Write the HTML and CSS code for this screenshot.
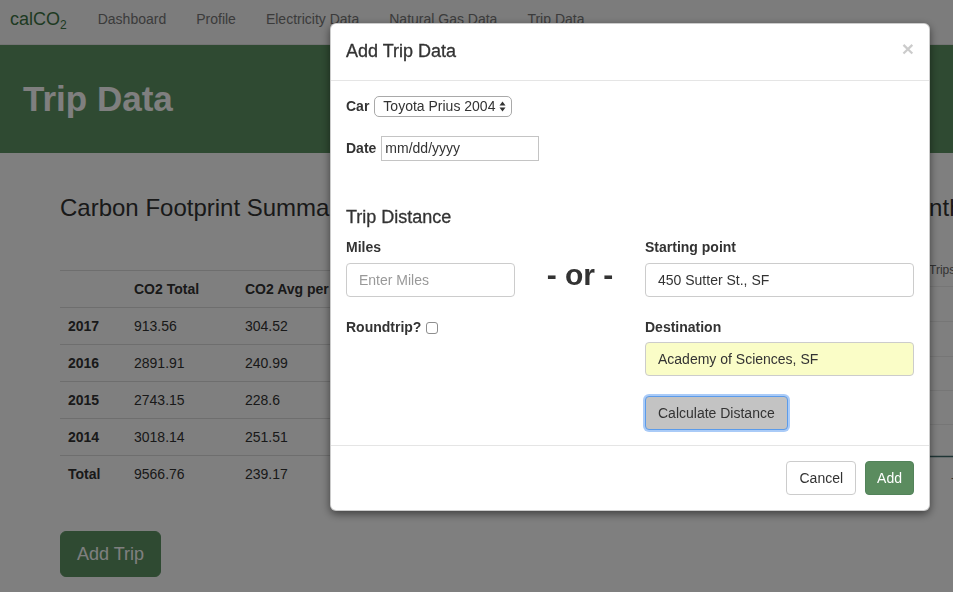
FILE: index.html
```html
<!DOCTYPE html>
<html lang="en">
<head>
<meta charset="utf-8">
<title>calCO2 - Trip Data</title>
<link rel="stylesheet" href="styles.css">
</head>
<body>
<div class="page">
  <nav class="navbar">
    <a class="brand">calCO<sub>2</sub></a>
    <a class="nav-link">Dashboard</a>
    <a class="nav-link">Profile</a>
    <a class="nav-link">Electricity Data</a>
    <a class="nav-link">Natural Gas Data</a>
    <a class="nav-link">Trip Data</a>
  </nav>
  <header class="banner">
    <h1>Trip Data</h1>
  </header>
  <main class="container">
    <section class="summary">
      <h3>Carbon Footprint Summary</h3>
      <table class="table">
        <thead>
          <tr><th class="c1"></th><th class="c2">CO2 Total</th><th>CO2 Avg per Month</th></tr>
        </thead>
        <tbody>
          <tr><th>2017</th><td>913.56</td><td>304.52</td></tr>
          <tr><th>2016</th><td>2891.91</td><td>240.99</td></tr>
          <tr><th>2015</th><td>2743.15</td><td>228.6</td></tr>
          <tr><th>2014</th><td>3018.14</td><td>251.51</td></tr>
          <tr><th>Total</th><td>9566.76</td><td>239.17</td></tr>
        </tbody>
      </table>
      <button class="btn-lg">Add Trip</button>
    </section>
    <section class="monthly">
      <h3>Carbon Footprint by Month</h3>
      <svg class="chart" width="523" height="240" viewBox="0 0 523 240">
        <text x="252" y="25" class="legend">Trips</text>
        <line x1="252" y1="37.5" x2="523" y2="37.5" class="grid"/>
        <line x1="252" y1="72.5" x2="523" y2="72.5" class="grid"/>
        <line x1="252" y1="107.5" x2="523" y2="107.5" class="grid"/>
        <line x1="252" y1="141.5" x2="523" y2="141.5" class="grid"/>
        <line x1="252" y1="175.5" x2="523" y2="175.5" class="grid"/>
        <line x1="252" y1="207.5" x2="523" y2="207.5" class="axis"/>
        <text x="274" y="233" class="tick">-</text>
      </svg>
    </section>
  </main>
</div>

<div class="backdrop"></div>

<div class="modal-wrap">
  <div class="modal">
    <div class="modal-header">
      <span class="close">&times;</span>
      <h4 class="modal-title">Add Trip Data</h4>
    </div>
    <div class="modal-body">
      <div class="inline-row">
        <label class="lbl">Car</label>
        <span class="select">Toyota Prius 2004
          <svg width="7" height="11" viewBox="0 0 7 11"><path d="M3.5 0.5 L6.5 4.5 H0.5 Z M3.5 10.5 L6.5 6.5 H0.5 Z" fill="#333"/></svg>
        </span>
      </div>
      <div class="inline-row">
        <label class="lbl">Date</label>
        <input class="date" type="text" value="mm/dd/yyyy">
      </div>
      <h4 class="section-title">Trip Distance</h4>
      <div class="distance">
        <div class="col">
          <div class="group">
            <label class="lbl block">Miles</label>
            <input class="form-control" type="text" placeholder="Enter Miles">
          </div>
          <div class="group">
            <label class="lbl block">Roundtrip? <input class="check" type="checkbox"></label>
          </div>
        </div>
        <div class="or">- or -</div>
        <div class="col">
          <div class="group">
            <label class="lbl block">Starting point</label>
            <input class="form-control" type="text" value="450 Sutter St., SF">
          </div>
          <div class="group">
            <label class="lbl block">Destination</label>
            <input class="form-control filled" type="text" value="Academy of Sciences, SF">
          </div>
          <button class="btn btn-calc">Calculate Distance</button>
        </div>
      </div>
    </div>
    <div class="modal-footer">
      <button class="btn btn-default">Cancel</button>
      <button class="btn btn-success">Add</button>
    </div>
  </div>
</div>
</body>
</html>
```

FILE: styles.css
```css
html, body {
  margin: 0;
  padding: 0;
  overflow: hidden;
}
body {
  font-family: "Liberation Sans", Arial, Helvetica, sans-serif;
  font-size: 14px;
  line-height: 1.42857;
  color: #333;
  background: #fff;
}
.page {
  width: 1260px;
}

/* navbar */
.navbar {
  display: flex;
  align-items: flex-start;
  height: 44px;
  background: #f8f8f8;
  border-bottom: 1px solid #e7e7e7;
}
.brand {
  font-size: 18px;
  color: #3c7444;
  padding: 0 16px 0 10px;
  line-height: 38px;
}
.brand sub {
  font-size: 12px;
  line-height: 0;
  vertical-align: -4px;
}
.nav-link {
  color: #777;
  padding: 0 15px;
  line-height: 39px;
}

/* banner */
.banner {
  height: 108px;
  background: #5e9464;
  display: flex;
  align-items: center;
  padding-left: 23px;
}
.banner h1 {
  margin: 0;
  font-size: 35px;
  font-weight: bold;
  color: #fff;
  line-height: 1.1;
}

/* content */
.container {
  width: 1140px;
  margin: 0 auto;
  display: grid;
  grid-template-columns: 1fr 1fr;
  column-gap: 94px;
}
h3 {
  font-size: 24px;
  font-weight: normal;
  line-height: 1.1;
  margin: 42px 0 28px;
  white-space: nowrap;
}
.table {
  width: 100%;
  border-collapse: collapse;
  margin-top: 48.6px;
}
.table th, .table td {
  text-align: left;
  padding: 8px;
  line-height: 20px;
  border-top: 1px solid #ddd;
  white-space: nowrap;
}
.table th { font-weight: bold; }
.table .c1 { width: 50px; }
.table .c2 { width: 95px; }
.btn-lg {
  margin-top: 39px;
  font-family: inherit;
  font-size: 18px;
  line-height: 24px;
  padding: 10px 16px;
  color: #fff;
  background: #5e9464;
  border: 1px solid #5e9464;
  border-radius: 6px;
}
.chart {
  display: block;
  overflow: visible;
}
.chart .legend {
  font-size: 12px;
  fill: #666;
  font-family: "Liberation Sans", Arial, sans-serif;
}
.chart .grid {
  stroke: #ececec;
  stroke-width: 1;
}
.chart .axis {
  stroke: #3f6b6b;
  stroke-width: 1.5;
}
.chart .tick {
  font-size: 12px;
  fill: #666;
  font-family: "Liberation Sans", Arial, sans-serif;
}

/* overlay + modal */
.backdrop {
  position: fixed;
  top: 0;
  left: 0;
  right: 0;
  bottom: 0;
  background: rgba(0, 0, 0, 0.5);
}
.modal-wrap {
  position: fixed;
  top: 0;
  left: 0;
  width: 1260px;
  display: flex;
  justify-content: center;
  padding-top: 23px;
}
.modal {
  width: 600px;
  box-sizing: border-box;
  background: #fff;
  border: 1px solid rgba(0, 0, 0, 0.2);
  border-radius: 6px;
  box-shadow: 0 3px 9px rgba(0, 0, 0, 0.5);
}
.modal-header {
  padding: 15px;
  border-bottom: 1px solid #e5e5e5;
}
.modal-title {
  margin: 0;
  font-size: 18px;
  font-weight: normal;
  line-height: 1.42857;
  -webkit-text-stroke: 0.3px #333;
}
.close {
  float: right;
  font-size: 21px;
  font-weight: bold;
  line-height: 1;
  color: #000;
  opacity: 0.2;
  margin-top: -1px;
}
.modal-body {
  padding: 15px;
}
.inline-row {
  display: flex;
  align-items: center;
  gap: 5px;
  margin-bottom: 19px;
}
.lbl {
  font-weight: bold;
  line-height: 20px;
}
.lbl.block {
  display: block;
  margin-bottom: 5.5px;
}
.select {
  display: inline-flex;
  align-items: center;
  gap: 4px;
  height: 19px;
  padding: 0 5px 0 8px;
  border: 1px solid #a9a9a9;
  border-radius: 5px;
  background: #fff;
  line-height: 19px;
}
.date {
  width: 158px;
  height: 25px;
  box-sizing: border-box;
  border: 1px solid #c4c4c4;
  padding: 0 3px;
  font-family: inherit;
  font-size: 14px;
  color: #333;
  margin: 0;
}
.section-title {
  margin: 47px 0 9.5px;
  font-size: 18px;
  font-weight: normal;
  line-height: 1.1;
  -webkit-text-stroke: 0.3px #333;
}
.distance {
  display: grid;
  grid-template-columns: 169px 70px 269px;
  column-gap: 30px;
}
.group {
  margin-bottom: 20px;
}
.form-control {
  display: block;
  width: 100%;
  height: 34px;
  box-sizing: border-box;
  padding: 6px 12px;
  font-family: inherit;
  font-size: 14px;
  color: #333;
  border: 1px solid #ccc;
  border-radius: 4px;
  background: #fff;
  margin: 0;
}
.form-control::placeholder { color: #999; }
.form-control.filled { background: #fafdc7; }
.check {
  appearance: none;
  -webkit-appearance: none;
  width: 12px;
  height: 12px;
  margin: 0 0 0 1px;
  border: 1px solid #8e8e8e;
  border-radius: 3px;
  vertical-align: -2px;
  background: #fff;
}
.or {
  padding-top: 21px;
  text-align: center;
  font-size: 30px;
  font-weight: bold;
  line-height: 34px;
  white-space: nowrap;
}
.btn {
  font-family: inherit;
  font-size: 14px;
  line-height: 20px;
  padding: 6px 12px;
  border-radius: 4px;
  border: 1px solid #ccc;
  color: #333;
  background: #fff;
}
.btn-calc {
  background: #c3c3c3;
  border-color: #5b9bea;
  box-shadow: 0 0 0 2px rgba(100, 160, 240, 0.55);
}
.modal-footer {
  padding: 15px;
  border-top: 1px solid #e5e5e5;
  display: flex;
  justify-content: flex-end;
  gap: 9px;
}
.btn-default {
  padding: 6px 12px;
}
.btn-success {
  background: #5b8c5f;
  border-color: #53835a;
  color: #fff;
  padding: 6px 11px;
}
```
